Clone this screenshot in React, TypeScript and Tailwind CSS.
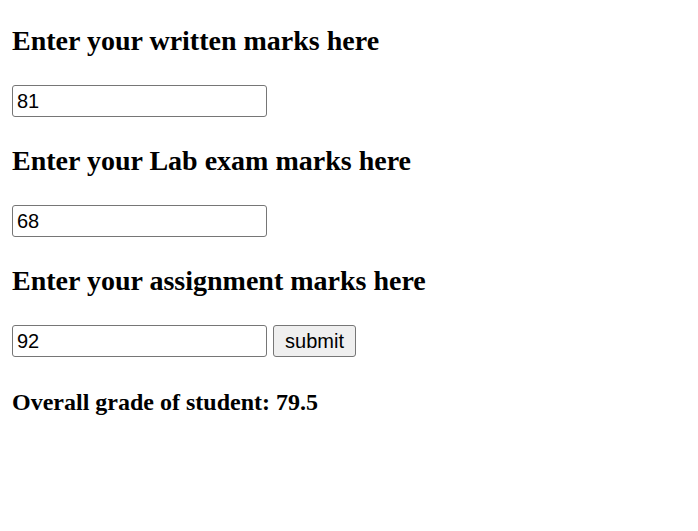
import { useState } from 'react';

const fields = [
  { label: 'Enter your written marks here', value: '81' },
  { label: 'Enter your Lab exam marks here', value: '68' },
  { label: 'Enter your assignment marks here', value: '92' },
];

export default function App() {
  const [marks, setMarks] = useState(fields.map((f) => f.value));

  return (
    <div className="min-h-[531px] bg-white pl-[12px] pt-[25px] text-black font-['Liberation_Serif',serif]">
      {fields.map((f, i) => (
        <div key={f.label} className={i > 0 ? 'mt-[27px]' : ''}>
          <h3 className="text-[28px] font-bold leading-[31px]">{f.label}</h3>
          <div className="mt-[29px] flex h-[33px] items-start gap-[6px]">
            <input
              type="text"
              value={marks[i]}
              onChange={(e) => setMarks((m) => m.map((v, j) => (j === i ? e.target.value : v)))}
              className="h-[32px] w-[255px] rounded-[3px] border border-[#767676] bg-white px-[4px] font-['Liberation_Sans',Arial,sans-serif] text-[20px] text-black outline-none"
            />
            {i === fields.length - 1 && (
              <button className="h-[32px] w-[83px] rounded-[3px] border border-[#767676] bg-[#efefef] font-['Liberation_Sans',Arial,sans-serif] text-[20px] text-black">
                submit
              </button>
            )}
          </div>
        </div>
      ))}
      <h4 className="mt-[31px] text-[24px] font-bold leading-[27px]">Overall grade of student: 79.5</h4>
    </div>
  );
}
